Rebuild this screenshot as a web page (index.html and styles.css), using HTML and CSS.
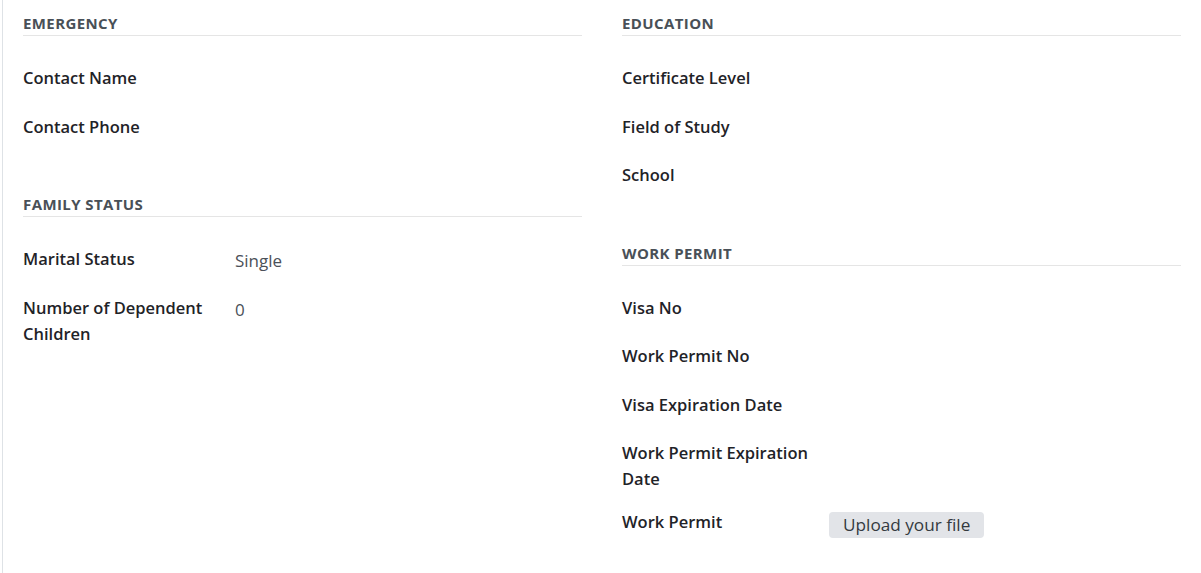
FILE: index.html
```html
<!DOCTYPE html>
<html lang="en">
<head>
    <meta charset="UTF-8">
    <meta name="viewport" content="width=device-width, initial-scale=1.0">
    <title>Employee - Private Information</title>
    <link rel="stylesheet" href="styles.css">
</head>
<body>
    <div class="sheet">
        <div class="col">
            <!-- Emergency -->
            <div class="group">
                <h3>Emergency</h3>
                <div class="row"><label>Contact Name</label><div class="value"></div></div>
                <div class="row"><label>Contact Phone</label><div class="value"></div></div>
            </div>

            <!-- Family status -->
            <div class="group">
                <h3>Family Status</h3>
                <div class="row"><label>Marital Status</label><div class="value"><span class="text">Single</span></div></div>
                <div class="row"><label>Number of Dependent Children</label><div class="value"><span class="text">0</span></div></div>
            </div>
        </div>

        <div class="col">
            <!-- Education -->
            <div class="group">
                <h3>Education</h3>
                <div class="row"><label>Certificate Level</label><div class="value"></div></div>
                <div class="row"><label>Field of Study</label><div class="value"></div></div>
                <div class="row"><label>School</label><div class="value"></div></div>
            </div>

            <!-- Work permit -->
            <div class="group">
                <h3>Work Permit</h3>
                <div class="row"><label>Visa No</label><div class="value"></div></div>
                <div class="row"><label>Work Permit No</label><div class="value"></div></div>
                <div class="row"><label>Visa Expiration Date</label><div class="value"></div></div>
                <div class="row"><label>Work Permit Expiration Date</label><div class="value"></div></div>
                <div class="row"><label>Work Permit</label><div class="value"><button class="upload">Upload your file</button></div></div>
            </div>
        </div>
    </div>
</body>
</html>
```

FILE: styles.css
```css
body {
    margin: 0;
    font-family: "Open Sans", "Noto Sans", sans-serif;
    color: #1f2328;
    background: white;
}
.sheet {
    display: grid;
    grid-template-columns: 1fr 1fr;
    column-gap: 40px;
    margin-left: 2px;
    border-left: 1px solid #dee2e6;
    padding: 13px 20px 0 20px;
    min-height: 560px;
}
.group { margin-bottom: 32px; }
.group h3 {
    margin: 0 0 29px 0;
    padding-bottom: 2px;
    font-size: 15px;
    line-height: 20px;
    font-weight: 700;
    letter-spacing: 0.4px;
    text-transform: uppercase;
    color: #495057;
    border-bottom: 1px solid #e5e5e5;
}
.row {
    display: grid;
    grid-template-columns: 207px 1fr;
    padding-bottom: 17px;
}
.row label {
    font-size: 16.5px;
    line-height: 26px;
    font-weight: 600;
    padding-right: 20px;
}
.value {
    min-height: 31.5px;
    font-size: 17px;
    line-height: 26px;
    color: #4b5058;
}
.value .text {
    display: inline-block;
    padding: 2px 0 0 5px;
    font-weight: 400;
}
.upload {
    margin-top: 2.5px;
    height: 26px;
    padding: 0 14px;
    border: none;
    border-radius: 4px;
    background: #e2e4e8;
    color: #343a40;
    font-family: inherit;
    font-size: 17.2px;
    font-weight: 400;
    cursor: pointer;
}
```
